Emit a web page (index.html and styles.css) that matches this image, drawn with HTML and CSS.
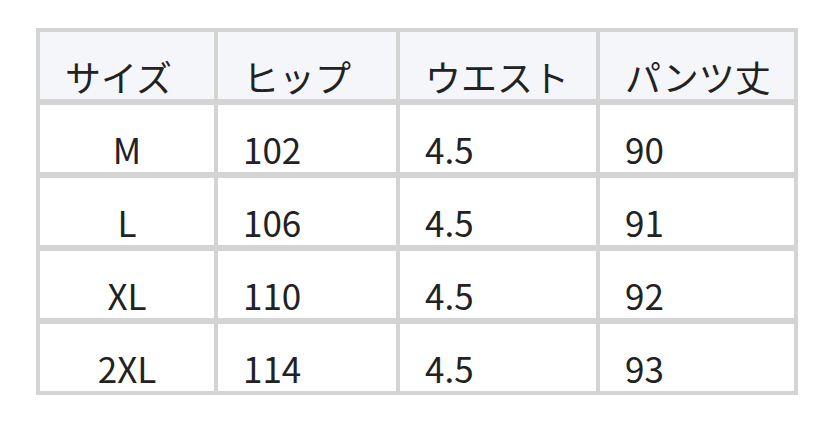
FILE: index.html
```html
<!DOCTYPE html>
<html lang="ja">
<head>
<meta charset="utf-8">
<link rel="stylesheet" href="styles.css">
</head>
<body>
<div class="size-table">
  <div class="cell head">サイズ</div>
  <div class="cell head">ヒップ</div>
  <div class="cell head">ウエスト</div>
  <div class="cell head">パンツ丈</div>

  <div class="cell first">M</div>
  <div class="cell">102</div>
  <div class="cell">4.5</div>
  <div class="cell">90</div>

  <div class="cell first">L</div>
  <div class="cell">106</div>
  <div class="cell">4.5</div>
  <div class="cell">91</div>

  <div class="cell first">XL</div>
  <div class="cell">110</div>
  <div class="cell">4.5</div>
  <div class="cell">92</div>

  <div class="cell first">2XL</div>
  <div class="cell">114</div>
  <div class="cell">4.5</div>
  <div class="cell">93</div>
</div>
</body>
</html>
```
FILE: styles.css
```css
html, body {
  margin: 0;
  padding: 0;
  background: #ffffff;
}

body {
  font-family: "Noto Sans CJK JP", "Noto Sans", sans-serif;
  color: #222222;
}

.size-table {
  display: grid;
  grid-template-columns: 174px 178px 196px 194px;
  grid-auto-rows: 67px;
  column-gap: 4px;
  row-gap: 6px;
  padding: 4px;
  background: #d4d4d4;
  width: max-content;
  margin: 28px 0 0 36px;
}

.cell {
  background: #ffffff;
  display: flex;
  align-items: center;
  padding: 20px 0 0 25px;
  font-size: 35px;
  line-height: 35px;
  box-sizing: border-box;
}

.cell.head {
  background: #f5f6fa;
  padding-left: 25px;
  font-size: 36px;
  line-height: 36px;
}

.cell.first {
  justify-content: center;
  padding-left: 0;
}
```
